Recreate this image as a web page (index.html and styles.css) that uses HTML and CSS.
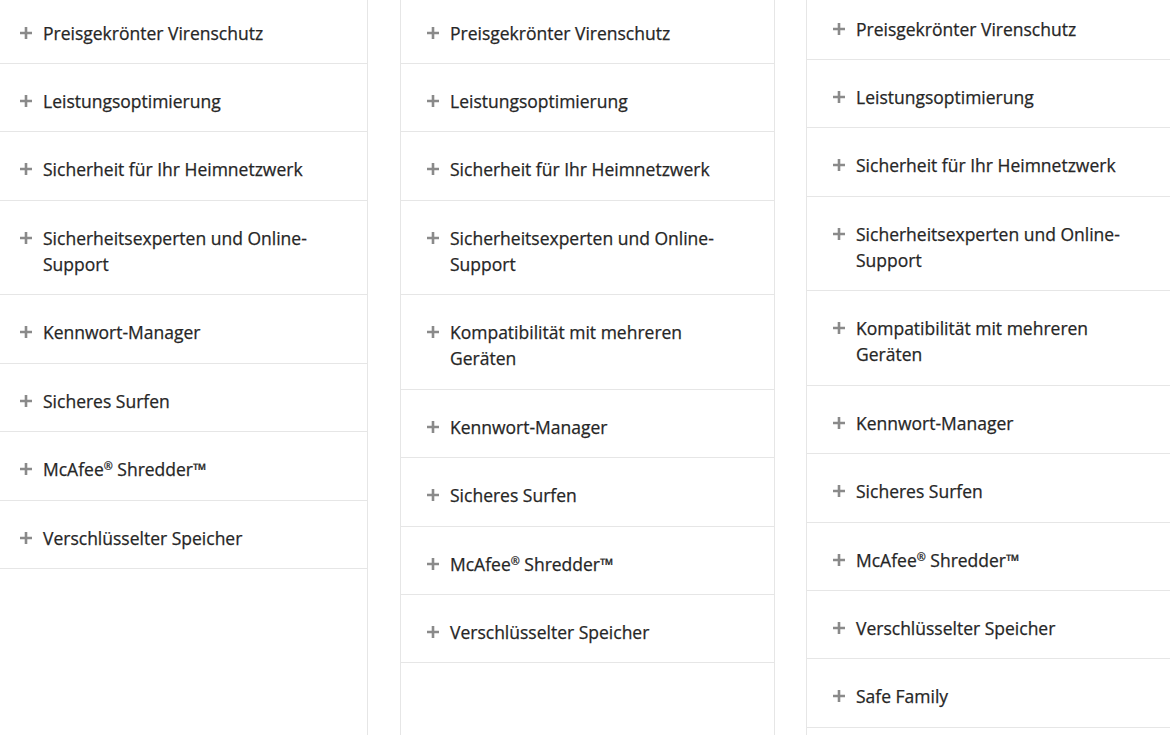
FILE: index.html
```html
<!DOCTYPE html>
<html lang="de">
<head>
<meta charset="utf-8">
<title>Funktionen</title>
<link rel="stylesheet" href="styles.css">
</head>
<body>
<div class="page">
  <div class="col">
    <ul class="list">
      <li class="item"><svg class="plus" viewBox="0 0 12 12"><path d="M6 0V12M0 6H12"/></svg><span class="label">Preisgekrönter Virenschutz</span></li>
      <li class="item"><svg class="plus" viewBox="0 0 12 12"><path d="M6 0V12M0 6H12"/></svg><span class="label">Leistungsoptimierung</span></li>
      <li class="item"><svg class="plus" viewBox="0 0 12 12"><path d="M6 0V12M0 6H12"/></svg><span class="label">Sicherheit für Ihr Heimnetzwerk</span></li>
      <li class="item"><svg class="plus" viewBox="0 0 12 12"><path d="M6 0V12M0 6H12"/></svg><span class="label">Sicherheitsexperten und Online-Support</span></li>
      <li class="item"><svg class="plus" viewBox="0 0 12 12"><path d="M6 0V12M0 6H12"/></svg><span class="label">Kennwort-Manager</span></li>
      <li class="item"><svg class="plus" viewBox="0 0 12 12"><path d="M6 0V12M0 6H12"/></svg><span class="label">Sicheres Surfen</span></li>
      <li class="item"><svg class="plus" viewBox="0 0 12 12"><path d="M6 0V12M0 6H12"/></svg><span class="label">McAfee<sup>®</sup> Shredder™</span></li>
      <li class="item"><svg class="plus" viewBox="0 0 12 12"><path d="M6 0V12M0 6H12"/></svg><span class="label">Verschlüsselter Speicher</span></li>
    </ul>
  </div>
  <div class="col">
    <ul class="list">
      <li class="item"><svg class="plus" viewBox="0 0 12 12"><path d="M6 0V12M0 6H12"/></svg><span class="label">Preisgekrönter Virenschutz</span></li>
      <li class="item"><svg class="plus" viewBox="0 0 12 12"><path d="M6 0V12M0 6H12"/></svg><span class="label">Leistungsoptimierung</span></li>
      <li class="item"><svg class="plus" viewBox="0 0 12 12"><path d="M6 0V12M0 6H12"/></svg><span class="label">Sicherheit für Ihr Heimnetzwerk</span></li>
      <li class="item"><svg class="plus" viewBox="0 0 12 12"><path d="M6 0V12M0 6H12"/></svg><span class="label">Sicherheitsexperten und Online-Support</span></li>
      <li class="item"><svg class="plus" viewBox="0 0 12 12"><path d="M6 0V12M0 6H12"/></svg><span class="label">Kompatibilität mit mehreren Geräten</span></li>
      <li class="item"><svg class="plus" viewBox="0 0 12 12"><path d="M6 0V12M0 6H12"/></svg><span class="label">Kennwort-Manager</span></li>
      <li class="item"><svg class="plus" viewBox="0 0 12 12"><path d="M6 0V12M0 6H12"/></svg><span class="label">Sicheres Surfen</span></li>
      <li class="item"><svg class="plus" viewBox="0 0 12 12"><path d="M6 0V12M0 6H12"/></svg><span class="label">McAfee<sup>®</sup> Shredder™</span></li>
      <li class="item"><svg class="plus" viewBox="0 0 12 12"><path d="M6 0V12M0 6H12"/></svg><span class="label">Verschlüsselter Speicher</span></li>
    </ul>
  </div>
  <div class="col col-shift">
    <ul class="list">
      <li class="item"><svg class="plus" viewBox="0 0 12 12"><path d="M6 0V12M0 6H12"/></svg><span class="label">Preisgekrönter Virenschutz</span></li>
      <li class="item"><svg class="plus" viewBox="0 0 12 12"><path d="M6 0V12M0 6H12"/></svg><span class="label">Leistungsoptimierung</span></li>
      <li class="item"><svg class="plus" viewBox="0 0 12 12"><path d="M6 0V12M0 6H12"/></svg><span class="label">Sicherheit für Ihr Heimnetzwerk</span></li>
      <li class="item"><svg class="plus" viewBox="0 0 12 12"><path d="M6 0V12M0 6H12"/></svg><span class="label">Sicherheitsexperten und Online-Support</span></li>
      <li class="item"><svg class="plus" viewBox="0 0 12 12"><path d="M6 0V12M0 6H12"/></svg><span class="label">Kompatibilität mit mehreren Geräten</span></li>
      <li class="item"><svg class="plus" viewBox="0 0 12 12"><path d="M6 0V12M0 6H12"/></svg><span class="label">Kennwort-Manager</span></li>
      <li class="item"><svg class="plus" viewBox="0 0 12 12"><path d="M6 0V12M0 6H12"/></svg><span class="label">Sicheres Surfen</span></li>
      <li class="item"><svg class="plus" viewBox="0 0 12 12"><path d="M6 0V12M0 6H12"/></svg><span class="label">McAfee<sup>®</sup> Shredder™</span></li>
      <li class="item"><svg class="plus" viewBox="0 0 12 12"><path d="M6 0V12M0 6H12"/></svg><span class="label">Verschlüsselter Speicher</span></li>
      <li class="item"><svg class="plus" viewBox="0 0 12 12"><path d="M6 0V12M0 6H12"/></svg><span class="label">Safe Family</span></li>
    </ul>
  </div>
</div>
</body>
</html>
```

FILE: styles.css
```css
html, body {
  margin: 0;
  padding: 0;
  background: #ffffff;
  overflow: hidden;
}

body {
  font-family: "Open Sans", "Liberation Sans", sans-serif;
  font-size: 17.5px;
  line-height: 26px;
  color: #262626;
  -webkit-text-stroke: 0.25px #262626;
}

.page {
  display: flex;
  align-items: flex-start;
  gap: 32px;
  margin-left: -7px;
  margin-top: -4.43px;
}

.col {
  flex: none;
  width: 375px;
  min-height: 760px;
  box-sizing: border-box;
  border-left: 1px solid #e6e6e6;
  border-right: 1px solid #e6e6e6;
}

.col-shift {
  margin-top: -4px;
  margin-left: -1px;
}

.list {
  list-style: none;
  margin: 0;
  padding: 0;
}

.item {
  display: flex;
  align-items: flex-start;
  gap: 11px;
  padding: 24px 0 17.43px 26px;
  border-bottom: 1px solid #e6e6e6;
}

.plus {
  flex: none;
  width: 12px;
  height: 12px;
  margin-top: 7px;
  stroke: #8a8a8a;
  stroke-width: 2.6;
  fill: none;
}

.label {
  max-width: 285px;
}

.label sup {
  font-size: 0.62em;
  line-height: 0;
  vertical-align: 0.55em;
}
```
